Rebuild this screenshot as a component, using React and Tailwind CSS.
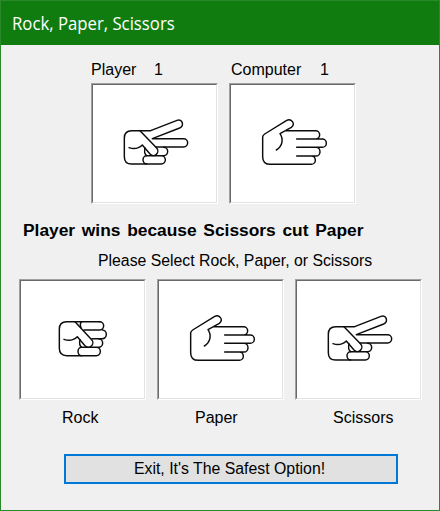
import React from "react";

const lineProps = {
  fill: "none",
  stroke: "#0c0c0c",
  strokeWidth: 4.4,
  strokeLinecap: "round",
  strokeLinejoin: "round",
};

function Rock() {
  return (
    <svg viewBox="-72 -72 366 348" className="block h-full w-full" {...lineProps}>
      <path d="M164 50H65Q43 50 43 72V130Q43 152 65 152H110" />
      <path d="M110 50Q103 56 108 68M164 50A12 12.5 0 0 1 164 75H117" />
      <path d="M172 75A12 13 0 0 1 172 101H141" />
      <path d="M161 101A12 13 0 0 1 161 127H110A11 12.5 0 0 0 110 152H154A12 12.5 0 0 0 154 127" />
      <path d="M105 104Q101 120 110 127" />
      <path d="M90 50L140 104A13 13 0 0 1 120 122L97 95Q80 111 57 103" />
    </svg>
  );
}

function Paper() {
  return (
    <svg viewBox="-57 -75 366 348" className="block h-full w-full" {...lineProps}>
      <path d="M105 62H197A12 12.5 0 0 1 197 87M140 87H217A12 12.5 0 0 1 217 112H140M198 112A12 13 0 0 1 198 138H140M184 138A12 12.5 0 0 1 184 163H61Q38 163 38 140V81Q38 76 44 72L109 32C123 23 139 42 124 52L90 71C101 87 98 109 79 120" />
    </svg>
  );
}

function Scissors() {
  return (
    <svg viewBox="-51 -75 366 348" className="block h-full w-full" {...lineProps}>
      <path d="M110 162H65Q43 162 43 140V84Q43 62 65 62H122L201 31C217 25 224 47 209 54L127 86H221A12 12.5 0 0 1 221 111H138" />
      <path d="M161 112A12 12.5 0 0 1 161 137H110A11 12.5 0 0 0 110 162H154A12 12.5 0 0 0 154 137" />
      <path d="M105 114Q101 130 110 137" />
      <path d="M90 62L140 114A13 13 0 0 1 120 132L97 105Q80 121 57 113" />
    </svg>
  );
}

function Picture({ children }) {
  return (
    <div className="h-[121px] w-[127px] border border-t-[#a0a0a0] border-r-white border-b-white border-l-[#a0a0a0]">
      <div className="h-full w-full border border-t-[#696969] border-r-[#e3e3e3] border-b-[#e3e3e3] border-l-[#696969] bg-white">
        <div className="h-[116px] w-[122px]">{children}</div>
      </div>
    </div>
  );
}

export default function App() {
  return (
    <div className="flex h-[511px] w-[440px] flex-col overflow-hidden border border-[#2a8a2a] bg-[#f0f0f0] font-['Liberation_Sans',sans-serif] text-[16px] leading-[20px] text-black">
      <header className="flex h-[44px] shrink-0 items-center bg-[#107c10] pl-[11px] font-['Open_Sans',sans-serif] text-[18px] font-normal whitespace-nowrap text-white">
        <span className="origin-left scale-x-[0.93]">Rock, Paper, Scissors</span>
      </header>
      <main className="flex flex-col whitespace-nowrap">
        <section className="flex gap-[11px] pt-[15px] pl-[90px]">
          <div>
            <div className="mb-[3px] flex h-[20px]">
              <span className="w-[63px]">Player</span>
              <span>1</span>
            </div>
            <Picture><Scissors /></Picture>
          </div>
          <div>
            <div className="mb-[3px] flex h-[20px] pl-[2px]">
              <span className="w-[89px]">Computer</span>
              <span>1</span>
            </div>
            <Picture><Paper /></Picture>
          </div>
        </section>
        <p className="mt-[17px] ml-[22px] w-max origin-left scale-x-[1.085] font-bold [word-spacing:1.75px]">Player wins because Scissors cut Paper</p>
        <p className="mt-[10px] ml-[97px] w-max origin-left scale-x-[0.988]">Please Select Rock, Paper, or Scissors</p>
        <section className="mt-[8px] flex gap-[11px] pl-[18px]">
          <div>
            <Picture><Rock /></Picture>
            <div className="mt-[8px] pl-[43px]">Rock</div>
          </div>
          <div>
            <Picture><Paper /></Picture>
            <div className="mt-[8px] pl-[38px]">Paper</div>
          </div>
          <div>
            <Picture><Scissors /></Picture>
            <div className="mt-[8px] pl-[38px]">Scissors</div>
          </div>
        </section>
        <button className="mt-[26px] ml-[63px] h-[30px] w-[334px] border-2 border-[#0078d7] bg-[#e1e1e1] pr-[2px] leading-[26px]">
          <span className="inline-block scale-x-[0.99]">Exit, It's The Safest Option!</span>
        </button>
      </main>
    </div>
  );
}
